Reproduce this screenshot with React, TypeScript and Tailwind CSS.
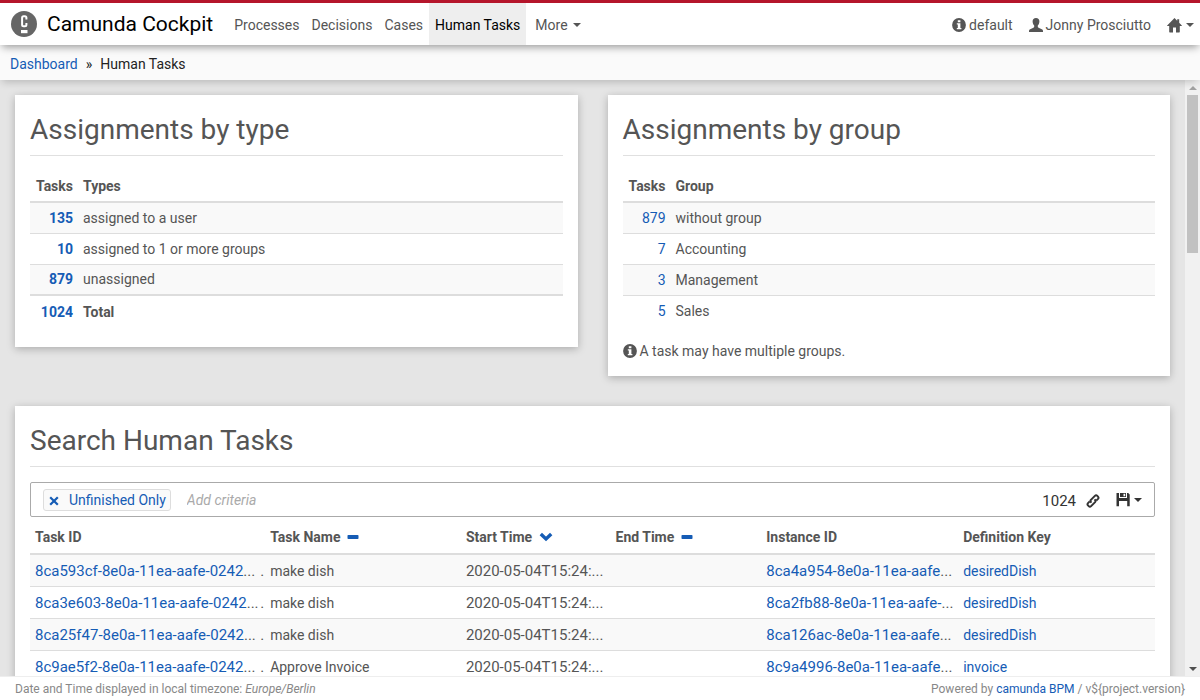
import React from 'react';

type IconProps = { className?: string };

function InfoIcon({ className = '' }: IconProps) {
  return (
    <svg viewBox="0 0 14 14" className={`size-3.5 shrink-0 ${className}`} fill="currentColor" aria-hidden="true">
      <path fillRule="evenodd" d="M7 .1a6.9 6.9 0 1 1 0 13.8A6.9 6.9 0 0 1 7 .1ZM5.8 2.2v2h2.6v-2ZM4.8 5.3v1.2h1v3.4h-1v1.3h4.6V9.9h-1V5.3Z" />
    </svg>
  );
}

function UserIcon() {
  return (
    <svg viewBox="0 0 14 14" className="size-3.5 shrink-0" fill="currentColor" aria-hidden="true">
      <path d="M7 0c2.200 0 3.400 1.300 3.400 3.200 0 1.900-.6 3.300-1.600 4.300v1.300c0 .5.300.8.8 1l3.200 1.400c.8.4 1.200.9 1.200 1.800v.9H0V13c0-.9.4-1.400 1.200-1.800l3.200-1.400c.5-.2.8-.5.8-1V7.500c-1-1-1.600-2.400-1.600-4.300C3.600 1.300 4.800 0 7 0Z" />
    </svg>
  );
}

function HomeIcon() {
  return (
    <svg viewBox="0 0 15 15" className="size-[15px] shrink-0" fill="currentColor" aria-hidden="true">
      <path d="M7.500 0 .2 7.400c-.3.300-.1.700.3.700H2.200v5.700c0 .4.200.6.600.6h3.200V9.500h3v4.900h3.200c.4 0 .6-.2.6-.6V8.100h1.700c.4 0 .6-.4.300-.7L12.200 4.700V1.300H10.200v1.400Z" />
    </svg>
  );
}

function Caret() {
  return (
    <svg viewBox="0 0 8 4" className="h-1 w-2 shrink-0" fill="currentColor" aria-hidden="true">
      <path d="M0 0h8L4 4Z" />
    </svg>
  );
}

function LinkIcon() {
  return (
    <svg viewBox="0 0 14 14" className="size-3.5 shrink-0" fill="none" stroke="currentColor" strokeWidth="2" strokeLinejoin="round" aria-hidden="true">
      <path d="M5.500 8.600 4.900 8c-.6-.7-.6-1.400 0-2.100L8.900 1.900c.8-.8 1.600-.8 2.400 0l.7.700c.7.800.7 1.500 0 2.300L10.300 6.600" />
      <path d="m8.500 5.400.6.600c.6.700.6 1.400 0 2.100l-4 4c-.8.800-1.600.8-2.400 0l-.7-.7c-.7-.8-.7-1.500 0-2.300l1.700-1.700" />
    </svg>
  );
}

function SaveIcon() {
  return (
    <svg viewBox="0 0 14 14" className="size-3.5 shrink-0" fill="currentColor" aria-hidden="true">
      <path fillRule="evenodd" d="M.5 0H3v5h8V0h1.200L13.700 1.500V13.200H11.200V8h-8.200v5.200H.5ZM4 0h6v4H4ZM7.500.8v2.400h1.700V.8Z" />
    </svg>
  );
}

function MinusIcon() {
  return (
    <svg viewBox="0 0 12 4" className="h-1 w-3 shrink-0" fill="#155cb5" aria-hidden="true">
      <rect x=".5" width="11" height="4" rx=".8" />
    </svg>
  );
}

function ChevronIcon() {
  return (
    <svg viewBox="0 0 14 10" className="h-2.5 w-3.5 shrink-0" fill="none" stroke="#155cb5" strokeWidth="3.400" aria-hidden="true">
      <path d="m1.800 1.900 5.200 5 5.200-5" />
    </svg>
  );
}

function Logo() {
  return (
    <svg viewBox="0 0 26 26" className="size-[26px] shrink-0" aria-hidden="true">
      <circle cx="13" cy="13" r="13" fill="#666" />
      <path d="M15.400 8.600V6.700c0-1-.6-1.500-1.500-1.500h-1.300c-.9 0-1.500.5-1.500 1.500v7.100c0 1 .6 1.500 1.500 1.500h1.300c.9 0 1.500-.5 1.500-1.500V12" fill="none" stroke="#fff" strokeWidth="2" />
      <path d="M10 19h6.500v3.200H10z" fill="#fff" />
    </svg>
  );
}

const link = 'text-[#155cb5]';

function Card({ title, children }: { title: string; children: React.ReactNode }) {
  return (
    <section className="bg-white px-[15px] pt-[15px] shadow-[0_2px_8px_rgba(0,0,0,0.25)]">
      <h2 className="mb-[15px] h-[46px] border-b border-[#e0e0e0] text-[28px] leading-10">{title}</h2>
      {children}
    </section>
  );
}

type Row = [string, string];

function CountTable({ label, rows, total }: { label: string; rows: Row[]; total?: Row }) {
  const num = total ? 'font-bold' : '';
  return (
    <table className="w-full border-collapse">
      <thead>
        <tr className="border-b-2 border-[#ddd]">
          <th className="h-[31px] w-12 px-[5px] text-right">Tasks</th>
          <th className="px-[5px] text-left">{label}</th>
        </tr>
      </thead>
      <tbody>
        {rows.map(([count, name]) => (
          <tr key={name} className="border-t border-[#ddd] odd:bg-[#f9f9f9]">
            <td className={`h-[31px] px-[5px] text-right ${num}`}>
              <a href="#tasks" className={link}>{count}</a>
            </td>
            <td className="px-[5px]">{name}</td>
          </tr>
        ))}
      </tbody>
      {total && (
        <tfoot>
          <tr className="border-t-2 border-[#ddd] font-bold">
            <td className="h-8 px-[5px] text-right">
              <a href="#tasks" className={link}>{total[0]}</a>
            </td>
            <td className="px-[5px]">{total[1]}</td>
          </tr>
        </tfoot>
      )}
    </table>
  );
}

const tasks = [
  ['8ca593cf-8e0a-11ea-aafe-0242', 'make dish', '8ca4a954-8e0a-11ea-aafe', 'desiredDish'],
  ['8ca3e603-8e0a-11ea-aafe-0242', 'make dish', '8ca2fb88-8e0a-11ea-aafe-', 'desiredDish'],
  ['8ca25f47-8e0a-11ea-aafe-0242', 'make dish', '8ca126ac-8e0a-11ea-aafe', 'desiredDish'],
  ['8c9ae5f2-8e0a-11ea-aafe-0242', 'Approve Invoice', '8c9a4996-8e0a-11ea-aafe', 'invoice'],
];

function TaskTable() {
  return (
    <table className="mt-1 w-full table-fixed border-collapse whitespace-nowrap">
      <thead>
        <tr className="border-b-2 border-[#ddd] text-left">
          <th className="h-[33px] w-[20.9%] px-[5px]">Task ID</th>
          <th className="w-[17.4%] px-[5px]">
            <button className="flex items-center gap-[7px]">Task Name <MinusIcon /></button>
          </th>
          <th className="w-[13.3%] px-[5px]">
            <button className="flex items-center gap-[7px]">Start Time <ChevronIcon /></button>
          </th>
          <th className="w-[13.4%] px-[5px]">
            <button className="flex items-center gap-[7px]">End Time <MinusIcon /></button>
          </th>
          <th className="w-[17.5%] px-[5px]">Instance ID</th>
          <th className="px-[5px]">Definition Key</th>
        </tr>
      </thead>
      <tbody>
        {tasks.map(([id, name, instance, key]) => (
          <tr key={id} className="border-t border-[#ddd] odd:bg-[#f9f9f9]">
            <td className="h-8 pt-0.5 pr-px pl-[5px] text-[15px]">
              <div className="flex justify-between">
                <span><a href="#task" className={link}>{id}</a>...</span>
                <span>.</span>
              </div>
            </td>
            <td className="px-[5px] pt-0.5">{name}</td>
            <td className="px-[5px] pt-0.5 text-[15px]">2020-05-04T15:24:...</td>
            <td />
            <td className="px-[5px] pt-0.5 text-[15px]"><a href="#instance" className={link}>{instance}</a>...</td>
            <td className="px-[5px] pt-0.5"><a href="#definition" className={link}>{key}</a></td>
          </tr>
        ))}
      </tbody>
    </table>
  );
}

export default function App() {
  return (
    <div className="flex h-screen flex-col bg-[#e5e5e5] font-[Roboto,sans-serif] text-sm leading-5 text-[#555]">
      <header className="relative z-20 flex h-[45px] shrink-0 items-stretch border-t-3 border-[#b5152b] bg-white pr-[6px] pl-[11px] shadow-[0_4px_8px_-2px_rgba(0,0,0,0.4)]">
        <a href="#home" className="flex items-center gap-[10px] text-[21px] text-black">
          <Logo />
          Camunda Cockpit
        </a>
        <nav className="ml-[15px] flex items-stretch">
          <a href="#processes" className="flex items-center px-1.5 pt-0.5">Processes</a>
          <a href="#decisions" className="flex items-center px-1.5 pt-0.5">Decisions</a>
          <a href="#cases" className="flex items-center px-1.5 pt-0.5">Cases</a>
          <a href="#tasks" className="flex items-center bg-[#eee] px-1.5 pt-0.5 text-black">Human Tasks</a>
          <button className="flex items-center gap-[5px] px-[9px] pt-0.5">More <Caret /></button>
        </nav>
        <div className="ml-auto flex items-center gap-4 pt-0.5">
          <a href="#engine" className="flex items-center gap-[3px]"><InfoIcon />default</a>
          <a href="#user" className="flex items-center gap-[3px]"><UserIcon />Jonny Prosciutto</a>
          <button aria-label="Applications" className="flex items-center gap-1"><HomeIcon /><Caret /></button>
        </div>
      </header>

      <nav className="relative z-10 flex h-[35px] shrink-0 items-center gap-2 bg-[#fafafa] px-[10px] pt-[3px] text-[#222] shadow-[0_4px_8px_-2px_rgba(0,0,0,0.2)]">
        <a href="#dashboard" className={link}>Dashboard</a>
        <span>»</span>
        <span>Human Tasks</span>
      </nav>

      <div className="flex min-h-0 flex-1">
        <main className="min-w-0 flex-1 overflow-y-auto p-[15px] [scrollbar-width:none]">
          <div className="grid grid-cols-2 items-start gap-[30px]">
            <Card title="Assignments by type">
              <div className="pb-5">
                <CountTable
                  label="Types"
                  rows={[['135', 'assigned to a user'], ['10', 'assigned to 1 or more groups'], ['879', 'unassigned']]}
                  total={['1024', 'Total']}
                />
              </div>
            </Card>
            <Card title="Assignments by group">
              <CountTable
                label="Group"
                rows={[['879', 'without group'], ['7', 'Accounting'], ['3', 'Management'], ['5', 'Sales']]}
              />
              <p className="flex items-center gap-[3px] py-[15px]">
                <InfoIcon />A task may have multiple groups.
              </p>
            </Card>
          </div>

          <div className="mt-[30px]">
            <Card title="Search Human Tasks">
              <div className="flex h-[35px] items-center rounded-xs border border-[#aaa] px-3 text-[#333]">
                <span className="flex h-[22px] items-center gap-[9px] rounded-[3px] border border-[#ddd] bg-[#fafafa] px-1 text-[#155cb5]">
                  <button aria-label="Remove criterion">
                    <svg viewBox="0 0 12 12" className="mt-0.5 size-3" stroke="currentColor" strokeWidth="2.200" aria-hidden="true">
                      <path d="m2.200 2.200 7.600 7.600M9.800 2.200 2.200 9.800" />
                    </svg>
                  </button>
                  <button>Unfinished Only</button>
                </span>
                <input
                  aria-label="Add criteria"
                  placeholder="Add criteria"
                  className="ml-4 min-w-0 flex-1 italic outline-none placeholder:text-[#aaa]"
                />
                <span className="mr-[10px] pt-0.5 text-[15px]">1024</span>
                <button aria-label="Copy link" className="mr-4 pt-0.5"><LinkIcon /></button>
                <button aria-label="Saved searches" className="flex items-center gap-1"><SaveIcon /><Caret /></button>
              </div>
              <TaskTable />
              <div className="h-[15px]" />
            </Card>
          </div>
        </main>

        <div aria-hidden="true" className="flex w-[15px] shrink-0 flex-col items-center bg-[#f1f1f1]">
          <div className="flex h-[15px] items-center text-[#a3a3a3]"><span className="rotate-180"><Caret /></span></div>
          <div className="w-full flex-1 px-0.5"><div className="h-[28%] bg-[#c1c1c1]" /></div>
          <div className="flex h-[15px] items-center text-[#505050]"><Caret /></div>
        </div>
      </div>

      <footer className="relative z-10 flex h-6 shrink-0 items-center justify-between border-t border-[#eee] bg-white px-[15px] text-xs text-[#888]">
        <span>Date and Time displayed in local timezone: <em>Europe/Berlin</em></span>
        <span>Powered by <a href="#camunda" className={link}>camunda BPM</a> / v${'{project.version}'}</span>
      </footer>
    </div>
  );
}
